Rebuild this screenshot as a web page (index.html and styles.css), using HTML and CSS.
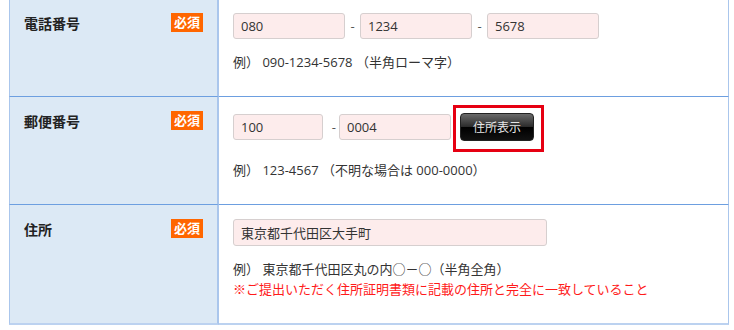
FILE: index.html
```html
<!DOCTYPE html>
<html lang="ja">
<head>
  <meta charset="UTF-8" />
  <title>お客様情報の入力</title>
  <link rel="stylesheet" href="styles.css">
</head>
<body>
  <table class="form-table">
    <tr>
      <th>
        <div class="label-line">
          <span class="label">電話番号</span>
          <span class="required">必須</span>
        </div>
      </th>
      <td>
        <div class="field-line">
          <input type="text" class="input tel" value="080" />
          <span class="dash">-</span>
          <input type="text" class="input tel" value="1234" />
          <span class="dash">-</span>
          <input type="text" class="input tel" value="5678" />
        </div>
        <p class="hint">例）&nbsp;090-1234-5678&nbsp;（半角ローマ字）</p>
      </td>
    </tr>
    <tr>
      <th>
        <div class="label-line">
          <span class="label">郵便番号</span>
          <span class="required">必須</span>
        </div>
      </th>
      <td>
        <div class="field-line zip-line">
          <input type="text" class="input zip-first" value="100" />
          <span class="dash dash-zip">-</span>
          <input type="text" class="input tel" value="0004" />
          <span class="marked">
            <button type="button" class="address-btn">住所表示</button>
          </span>
        </div>
        <p class="hint">例）&nbsp;123-4567&nbsp;（不明な場合は 000-0000）</p>
      </td>
    </tr>
    <tr class="last">
      <th>
        <div class="label-line">
          <span class="label">住所</span>
          <span class="required">必須</span>
        </div>
      </th>
      <td>
        <div class="field-line">
          <input type="text" class="input address" value="東京都千代田区大手町" />
        </div>
        <p class="hint">例）&nbsp;東京都千代田区丸の内○－○（半角全角）</p>
        <p class="hint warning">※ご提出いただく住所証明書類に記載の住所と完全に一致していること</p>
      </td>
    </tr>
  </table>
</body>
</html>
```

FILE: styles.css
```css
body {
  margin: 0;
  background: #fff;
  font-family: "Open Sans", "Noto Sans CJK JP", sans-serif;
  font-size: 13px;
  color: #333;
}

.form-table {
  width: 720px;
  margin: -2px 0 0 9px;
  border-collapse: separate;
  border-spacing: 0;
  table-layout: fixed;
}

.form-table th,
.form-table td {
  border-top: 1px solid #6d9fe0;
  vertical-align: top;
}

.form-table th {
  box-sizing: border-box;
  width: 210px;
  padding: 14px 14px 0 14px;
  background: #dce9f5;
  border-left: 1px solid #aac6ec;
  border-right: 2px solid #aac6ec;
  text-align: left;
}

.form-table td {
  padding: 14px 14px 24px 14px;
  border-right: 1px solid #aac6ec;
}

.form-table .last th,
.form-table .last td {
  border-bottom: 2px solid #bcd2f0;
}

.label-line {
  display: flex;
  justify-content: space-between;
  align-items: center;
  height: 19px;
}

.label {
  font-size: 14px;
  font-weight: bold;
  color: #222;
}

.required {
  display: inline-block;
  width: 32px;
  height: 19px;
  line-height: 19px;
  background: #ff6600;
  color: #fff;
  font-size: 13px;
  text-align: center;
}

.field-line {
  display: flex;
  align-items: center;
}

.zip-line {
  padding: 2px 0 6px;
}

.input {
  box-sizing: border-box;
  height: 26px;
  padding: 0 7px;
  border: 1px solid #d6cfcf;
  border-radius: 3px;
  background: #fdecec;
  font-family: inherit;
  font-size: 13px;
  color: #333;
}

.tel {
  width: 112px;
}

.zip-first {
  width: 90px;
}

.address {
  width: 314px;
  height: 27px;
}

.dash {
  width: 15px;
  text-align: center;
  color: #555;
}

.dash-zip {
  width: 16px;
  text-align: right;
  padding-right: 3px;
  box-sizing: border-box;
}

.marked {
  position: relative;
  margin-left: 9px;
  display: flex;
}

.marked::after {
  content: "";
  position: absolute;
  left: -7px;
  top: -8px;
  width: 85px;
  height: 41px;
  border: 3px solid #e60012;
}

.address-btn {
  width: 74px;
  height: 28px;
  padding: 0;
  border: 1px solid #222;
  border-radius: 4px;
  background: linear-gradient(#6a6a6a 0%, #2c2c2c 48%, #000 52%, #111 100%);
  color: #e6e6e6;
  font-family: inherit;
  font-size: 12px;
  cursor: pointer;
}

.hint {
  margin: 13px 0 0;
  line-height: 20px;
}

.hint + .hint {
  margin-top: 0;
}

.warning {
  color: #ff1a1a;
}
```
